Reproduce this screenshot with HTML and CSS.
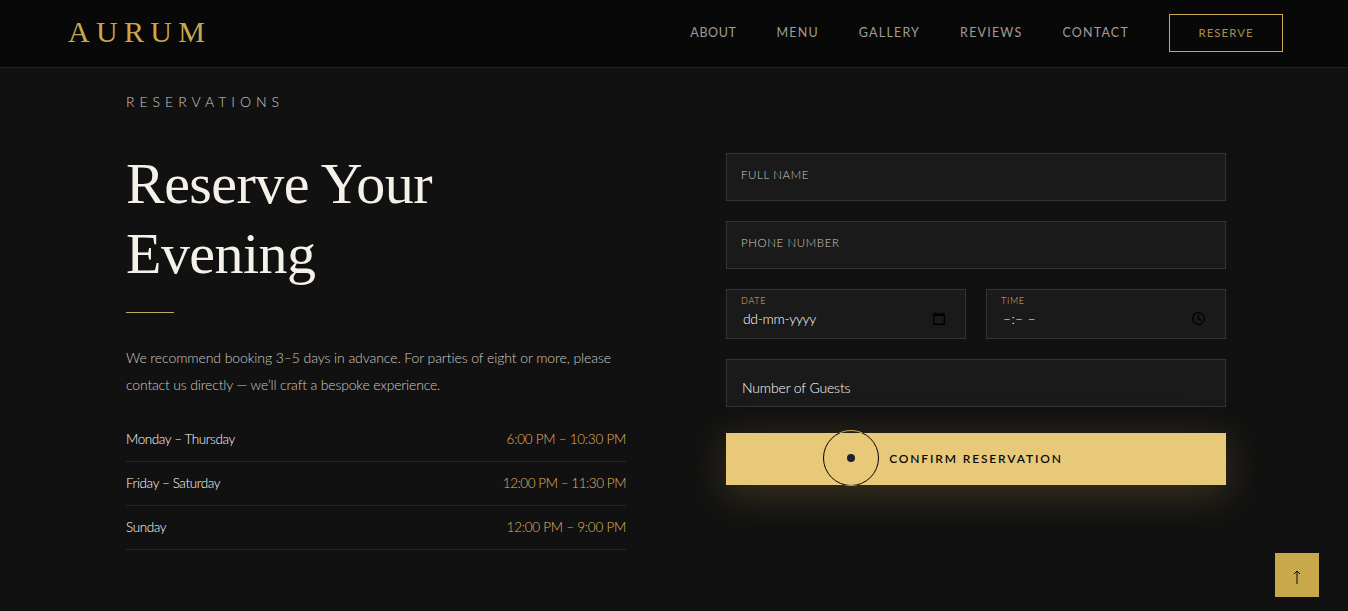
FILE: index.html
```html
<!DOCTYPE html>
<html lang="en">
<head>
    <meta charset="UTF-8">
    <meta name="viewport" content="width=device-width, initial-scale=1.0">
    <title>Aurum - Reservations</title>
    <link rel="stylesheet" href="styles.css">
</head>
<body>
    <nav class="navbar">
        <a href="#" class="logo">AURUM</a>
        <div class="nav-links">
            <a href="#about" class="nav-about">About</a>
            <a href="#menu">Menu</a>
            <a href="#gallery">Gallery</a>
            <a href="#reviews">Reviews</a>
            <a href="#contact">Contact</a>
            <a href="#reserve" class="nav-cta">Reserve</a>
        </div>
    </nav>

    <section class="reservation" id="reserve">
        <div class="info">
            <span class="section-label">Reservations</span>
            <h2>Reserve Your<br>Evening</h2>
            <div class="divider"></div>
            <p>We recommend booking 3–5 days in advance. For parties of eight or more, please<br><span class="tight">contact us directly — we’ll craft a bespoke experience.</span></p>
            <ul class="hours">
                <li><span>Monday – Thursday</span><span class="time">6:00 PM – 10:30 PM</span></li>
                <li><span>Friday – Saturday</span><span class="time late">12:00 PM – 11:30 PM</span></li>
                <li><span>Sunday</span><span class="time">12:00 PM – 9:00 PM</span></li>
            </ul>
        </div>

        <form class="form">
            <div class="field"><label>Full Name</label></div>
            <div class="field"><label>Phone Number</label></div>
            <div class="form-row">
                <div class="field picker">
                    <label>Date</label>
                    <div class="value">
                        <span class="date-text">dd-mm-yyyy</span>
                        <svg width="14" height="14" viewBox="0 0 14 14" fill="none" stroke="#000">
                            <path d="M1.7 2.5h10.6v9.8H1.7z" stroke-width="1.4"/>
                            <path d="M1 2.7h12" stroke-width="2.4"/>
                            <path d="M3.5 .5v2M10.5 .5v2" stroke-width="1.2"/>
                        </svg>
                    </div>
                </div>
                <div class="field picker">
                    <label>Time</label>
                    <div class="value">
                        <span class="time-text">–:– –</span>
                        <svg width="14" height="14" viewBox="0 0 14 14" fill="none" stroke="#000" stroke-width="1.3">
                            <circle cx="6.5" cy="6.5" r="5.8"/>
                            <path d="M6.5 3V6.9l2.8 1.7"/>
                        </svg>
                    </div>
                </div>
            </div>
            <div class="field guests"><span>Number of Guests</span></div>
            <button type="button" class="submit">Confirm Reservation</button>
        </form>
    </section>

    <a href="#" class="back-to-top">
        <svg width="8" height="14" viewBox="0 0 8 14" fill="none" stroke="#0a0a0a">
            <path d="M4 1v13M1 4l3-3 3 3"/>
        </svg>
    </a>

    <div class="cursor-ring"></div>
    <div class="cursor-dot"></div>
</body>
</html>
```
FILE: styles.css
```css
* {
    margin: 0;
    padding: 0;
    box-sizing: border-box;
}
body {
    background: #111;
    color: #fffdf8;
    font-family: Lato, "Open Sans", sans-serif;
    font-weight: 300;
    height: 611px;
    overflow: hidden;
}
a {
    text-decoration: none;
    color: inherit;
}

/* Navigation */
.navbar {
    height: 68px;
    padding: 0 65px 2px 68px;
    display: flex;
    align-items: center;
    justify-content: space-between;
    background: #080808;
    border-bottom: 1px solid #222;
}
.logo {
    padding-bottom: 2px;
    font-family: "Liberation Serif", serif;
    font-size: 30px;
    font-weight: 400;
    line-height: 62px;
    letter-spacing: 6.3px;
    color: #c9a84c;
}
.nav-links {
    display: flex;
    align-items: center;
    gap: 40px;
    font-size: 12.5px;
    font-weight: 400;
    letter-spacing: 1.2px;
    text-transform: uppercase;
    color: #a09c96;
}
.nav-about {
    letter-spacing: 0.6px;
}
.nav-cta {
    width: 114px;
    height: 38px;
    line-height: 36px;
    border: 1px solid #c9a84c;
    color: #a8904a;
    text-align: center;
    font-size: 11.5px;
    letter-spacing: 1px;
}

/* Reservation */
.reservation {
    display: grid;
    grid-template-columns: 500px 500px;
    gap: 100px;
    width: 1100px;
    margin: 0 0 0 126px;
    padding-top: 24px;
}
.section-label {
    display: block;
    line-height: 20px;
    font-size: 14px;
    letter-spacing: 5px;
    text-transform: uppercase;
    color: #cfcac2;
}
h2 {
    margin-top: 37px;
    font-family: "Liberation Serif", serif;
    font-size: 58px;
    font-weight: 400;
    line-height: 70px;
    letter-spacing: -0.55px;
    color: #f5f0e8;
}
.divider {
    width: 48px;
    height: 1px;
    margin-top: 23px;
    background: #c9a860;
}
.info p {
    margin-top: 31px;
    font-size: 14px;
    line-height: 27px;
    letter-spacing: -0.09px;
    white-space: nowrap;
    color: #cfcac2;
}
.info p .tight {
    letter-spacing: -0.17px;
}
.hours {
    margin-top: 20px;
    list-style: none;
    font-size: 13.5px;
    letter-spacing: -0.4px;
}
.hours li {
    display: flex;
    justify-content: space-between;
    align-items: center;
    height: 44px;
    padding-bottom: 1px;
    border-bottom: 1px solid #262626;
}
.hours .time {
    color: #e2b560;
    letter-spacing: -0.25px;
}
.hours .late {
    letter-spacing: -0.45px;
}

/* Form */
.form {
    display: flex;
    flex-direction: column;
    gap: 20px;
    padding-top: 61px;
}
.form-row {
    display: grid;
    grid-template-columns: 1fr 1fr;
    gap: 20px;
}
.field {
    height: 48px;
    padding: 0 15px 0 14px;
    background: #1a1a1a;
    border: 1px solid #333;
}
.field label {
    display: block;
    line-height: 42px;
    font-size: 11.5px;
    letter-spacing: 0.6px;
    text-transform: uppercase;
    color: #cfcac2;
}
.field.picker {
    height: 50px;
}
.field.picker label {
    line-height: 21px;
    font-size: 9px;
    letter-spacing: 0.7px;
    color: #e2b560;
}
.value {
    display: flex;
    justify-content: space-between;
    align-items: center;
    height: 15px;
    padding: 0 4px 0 2px;
    font-size: 14px;
}
.date-text {
    letter-spacing: -0.35px;
}
.time-text {
    letter-spacing: 0.3px;
}
.guests {
    padding-left: 15px;
    line-height: 56px;
    font-size: 14px;
    letter-spacing: -0.15px;
}
.submit {
    height: 52px;
    margin-top: 6px;
    padding-bottom: 2px;
    border: none;
    background: #e8c97a;
    color: #0a0a0a;
    font-family: inherit;
    font-size: 12px;
    font-weight: 600;
    letter-spacing: 1.85px;
    text-transform: uppercase;
    box-shadow: 0 8px 40px rgba(201, 168, 76, 0.25);
}

/* Floating pieces */
.back-to-top {
    position: fixed;
    right: 29px;
    bottom: 14px;
    width: 44px;
    height: 44px;
    display: flex;
    align-items: center;
    justify-content: center;
    padding-top: 3px;
    background: #c9a84c;
}
.cursor-dot,
.cursor-ring {
    position: fixed;
    left: 851px;
    top: 458px;
    border-radius: 50%;
    transform: translate(-50%, -50%);
    mix-blend-mode: difference;
    pointer-events: none;
}
.cursor-dot {
    width: 8px;
    height: 8px;
    background: #c9a84c;
}
.cursor-ring {
    width: 56px;
    height: 56px;
    border: 1px solid #e8c97a;
}
```
